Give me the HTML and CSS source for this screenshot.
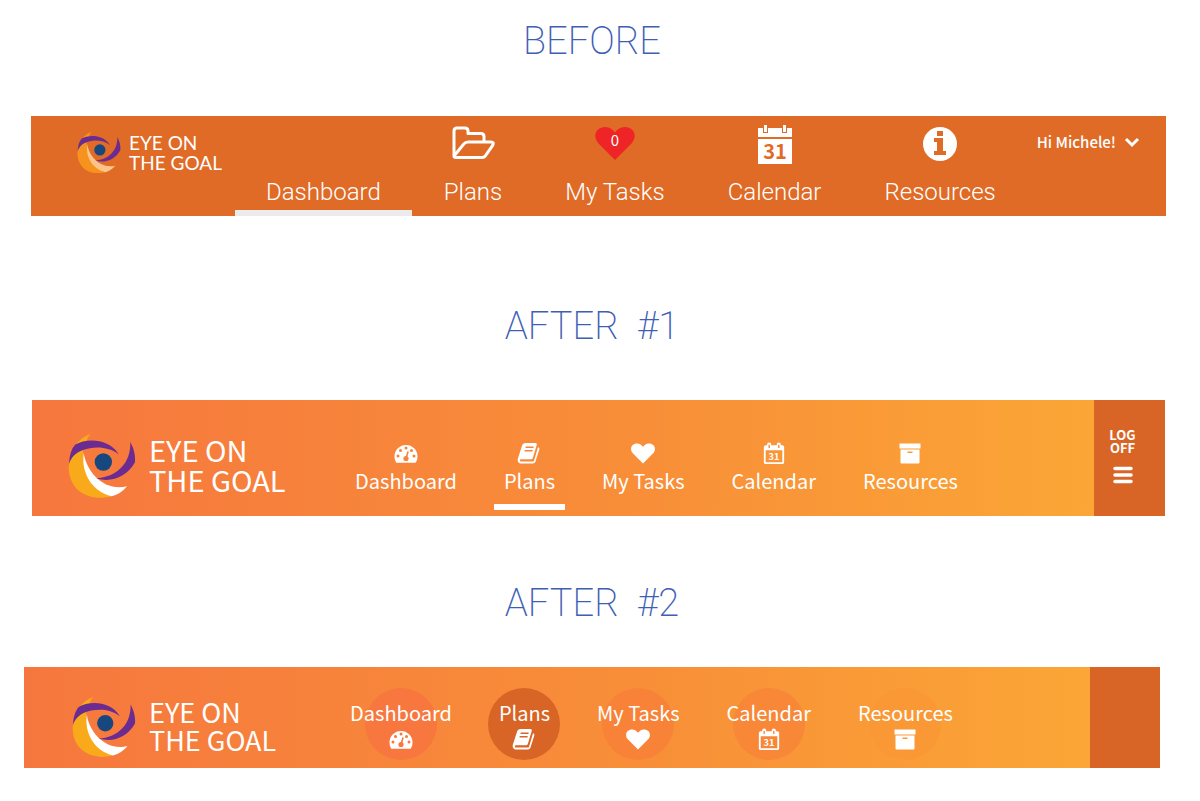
FILE: index.html
```html
<!DOCTYPE html>
<html lang="en">
<head>
<meta charset="utf-8">
<title>Eye on the Goal – navigation redesign</title>
<link rel="stylesheet" href="styles.css">
</head>
<body>
<svg class="sprite" aria-hidden="true">
  <symbol id="logo" viewBox="145 130 204 198">
    <path class="logo-gold" d="M212 133C192 140 176 154 165 170L148 222C144 246 152 278 172 298C200 326 244 329 276 320C226 302 191 254 190 181L200 156Q204 143 212 133Z"/>
    <path class="logo-light" d="M192 190C202 250 254 306 322 290Q304 313 276 320C214 305 184 246 192 190Z"/>
    <path class="logo-purple" d="M148 222C150 196 154 180 166 165C200 146 266 144 298 195C266 169 222 170 190 181C166 190 156 202 148 222Z"/>
    <path class="logo-purple" d="M332 157C341 174 348 194 346 218C322 262 274 280 230 266C290 262 334 222 332 157Z"/>
    <circle class="logo-pupil" cx="251" cy="217" r="26"/>
  </symbol>
  <symbol id="gauge" viewBox="0 0 24 24">
    <path fill="currentColor" d="M.5 15.500a11.500 11.500 0 0 1 23 0c0 2-.5 4-1.500 5.700q-.3.600-1.200.600H3.200q-.9 0-1.200-.6C1 19.500.5 17.500.5 15.500z"/>
    <g class="cut">
      <circle cx="4" cy="15" r="1.500"/><circle cx="6.500" cy="9.500" r="1.500"/><circle cx="12" cy="7" r="1.500"/><circle cx="17.500" cy="9.500" r="1.500"/><circle cx="20" cy="15" r="1.500"/>
      <circle cx="12" cy="17.500" r="2.600"/><path d="M13.300 10.300l1.500.4-2 7-1.600-.3z"/>
    </g>
  </symbol>
  <symbol id="book" viewBox="0 0 24 24">
    <path fill="currentColor" d="M8.500 2h9.800q2 0 1.500 1.800l-4 13.200q-.4 1.300-1.800 1.300H4.300q-1.800 0-1.400 1.400.2.900 1.600.900h11.200q1 0 1.400-1.200L21 6.200q1.900.4 1.300 2.300l-3.900 12.200q-.6 1.800-2.600 1.800H4.200q-2.800 0-3.500-2.800-.2-1.200.2-2.200L5.200 4.300Q6 2 8.500 2z"/>
    <path class="cut" d="M8.800 5.500h8l-.4 1.400h-8zM7.800 9h8l-.4 1.400h-8z"/>
  </symbol>
  <symbol id="heart" viewBox="0 0 24 24">
    <path fill="currentColor" d="M12 22.500L1.800 12.300C-2 7.500 1 2.500 6 2.500c3 0 4.700 1.800 6 3.300 1.300-1.500 3-3.300 6-3.300 5 0 8 5 4.200 9.800z"/>
  </symbol>
  <symbol id="calendar" viewBox="0 0 24 26">
    <path fill="currentColor" fill-rule="evenodd" d="M3 4.500h1.500V4q0-2.500 2.300-2.500T9 4v.5h6V4q0-2.500 2.200-2.500T19.500 4v.5H21q2 0 2 2V23q0 2-2 2H3q-2 0-2-2V6.500q0-2 2-2zM3 10v13h18V10z"/>
    <path class="cut" d="M6.100 4h1.400v3.500H6.100zM16.500 4h1.400v3.500h-1.400z"/>
    <text class="date-small" x="12" y="20.500">31</text>
  </symbol>
  <symbol id="box" viewBox="0 0 24 24">
    <path fill="currentColor" fill-rule="evenodd" d="M1.500 2.500h21v5h-21zM2.500 8.500h19v13q0 1-1 1h-17q-1 0-1-1zM9.500 10.500v1.500h5v-1.500z"/>
  </symbol>
</svg>

<main>
<section class="before">
  <h2 class="title">BEFORE</h2>
  <header class="bar bar-before">
    <a class="brand" href="#"><svg class="brand-mark"><use href="#logo"/></svg><span>EYE ON<br>THE GOAL</span></a>
    <nav class="nav">
      <a class="item active" href="#"><span>Dashboard</span></a>
      <a class="item" href="#">
        <svg class="icon" viewBox="0 0 44 40" fill="none" stroke="currentColor" stroke-width="3" stroke-linejoin="round"><path d="M3 31V6q0-3 3-3h8q3 0 3 3v2.500h13q3 0 3 3V17M3 31q0 1.500 2 1.500h26q2 0 3.500-1.800l7-10Q43.500 17 40 17H17q-2.500 0-4.200 2L3 31z"/></svg>
        <span>Plans</span></a>
      <a class="item" href="#">
        <svg class="icon" viewBox="0 0 44 40"><path fill="#ef2427" d="M22 35L5 18C-1 10 4 2 12 2c5 0 8 3 10 5.500C24 5 27 2 32 2c8 0 13 8 7 16z"/><text class="count" x="22" y="20.500">0</text></svg>
        <span>My Tasks</span></a>
      <a class="item" href="#">
        <svg class="icon" viewBox="0 0 44 40"><path fill="currentColor" d="M5 3h5v5h5V3h14v5h5V3h5v9H5zM11 0h3v7h-3zM30 0h3v7h-3zM5 14h34v25H5z"/><text class="date-large" x="22" y="34">31</text></svg>
        <span>Calendar</span></a>
      <a class="item" href="#">
        <svg class="icon" viewBox="0 0 44 40"><circle cx="22" cy="19" r="17" fill="currentColor"/><path fill="#df6b27" d="M19 6h6v5h-6zM16 13h9v13h3v4H16v-4h3v-9h-3z"/></svg>
        <span>Resources</span></a>
    </nav>
    <button class="user" type="button">Hi Michele!<svg class="chevron" viewBox="0 0 16 12"><path d="M2 3l6 6 6-6" fill="none" stroke="currentColor" stroke-width="3"/></svg></button>
  </header>
</section>

<section class="after after-one">
  <h2 class="title">AFTER  #1</h2>
  <header class="bar">
    <a class="brand" href="#"><svg class="brand-mark"><use href="#logo"/></svg><span>EYE ON<br>THE GOAL</span></a>
    <nav class="nav">
      <a class="item" href="#"><svg class="icon"><use href="#gauge"/></svg><span>Dashboard</span></a>
      <a class="item active" href="#"><svg class="icon"><use href="#book"/></svg><span>Plans</span></a>
      <a class="item" href="#"><svg class="icon"><use href="#heart"/></svg><span>My Tasks</span></a>
      <a class="item" href="#"><svg class="icon"><use href="#calendar"/></svg><span>Calendar</span></a>
      <a class="item" href="#"><svg class="icon"><use href="#box"/></svg><span>Resources</span></a>
    </nav>
    <button class="side" type="button"><span>LOG<br>OFF</span><svg class="menu" viewBox="0 0 20 18"><path d="M2 2.500h16M2 9h16M2 15.500h16" stroke="currentColor" stroke-width="3.500" stroke-linecap="round"/></svg></button>
  </header>
</section>

<section class="after after-two">
  <h2 class="title">AFTER  #2</h2>
  <header class="bar">
    <a class="brand" href="#"><svg class="brand-mark"><use href="#logo"/></svg><span>EYE ON<br>THE GOAL</span></a>
    <nav class="nav">
      <a class="item tint-1" href="#"><span>Dashboard</span><svg class="icon"><use href="#gauge"/></svg></a>
      <a class="item active" href="#"><span>Plans</span><svg class="icon"><use href="#book"/></svg></a>
      <a class="item tint-2" href="#"><span>My Tasks</span><svg class="icon"><use href="#heart"/></svg></a>
      <a class="item tint-3" href="#"><span>Calendar</span><svg class="icon"><use href="#calendar"/></svg></a>
      <a class="item tint-4" href="#"><span>Resources</span><svg class="icon"><use href="#box"/></svg></a>
    </nav>
    <div class="side"></div>
  </header>
</section>
</main>
</body>
</html>
```
FILE: styles.css
```css
* { box-sizing: border-box; }
body { margin: 0; background: #fff; color: #fff; font-family: "Noto Sans CJK SC", "Noto Sans", sans-serif; }
a { color: inherit; text-decoration: none; }
button { border: 0; color: inherit; font: inherit; cursor: pointer; }
.sprite { display: none; }

.title {
  margin: 0;
  padding-right: 16px;
  color: #3f5fb5;
  font: 200 38px/48px Roboto, sans-serif;
  text-align: center;
  white-space: pre;
}
.bar { display: flex; align-items: stretch; }
.brand { display: flex; align-items: flex-start; flex: none; }
.brand-mark { flex: none; }
.nav { display: flex; flex: 1; }
.item { display: flex; flex-direction: column; align-items: center; position: relative; white-space: nowrap; }

.logo-gold { fill: var(--gold, #f9aa1b); }
.logo-light { fill: var(--light, #fff); }
.logo-purple { fill: #6b2b91; }
.logo-pupil { fill: #17477f; }

.before { padding-top: 17px; }
.bar-before { height: 100px; margin: 51px 34px 0 31px; background: #df6b27; font-family: Roboto, sans-serif; }
.bar-before .brand { --gold: #f5931e; --light: #fcc48a; width: 204px; padding: 15px 0 0 46px; gap: 8px; font: 400 19px/20px Lato, sans-serif; }
.bar-before .brand span { padding-top: 2px; }
.bar-before .brand-mark { width: 44px; height: 43px; }
.bar-before .nav { gap: 1px; }
.bar-before .item { justify-content: flex-end; padding: 0 31px 9px; font-size: 24px; font-weight: 300; line-height: 30px; }
.bar-before .icon { width: 44px; height: 40px; margin-bottom: 12px; }
.bar-before .active { border-bottom: 6px solid #ebebeb; padding-bottom: 3px; }
.count { fill: #fff; font: 400 15px "Noto Sans CJK SC", sans-serif; text-anchor: middle; }
.date-large { fill: #df6b27; font: 700 20px "Noto Sans CJK SC", sans-serif; text-anchor: middle; }
.user { display: flex; align-items: center; align-self: flex-start; gap: 8px; margin: 16px 26px 0 0; padding: 0; background: none; font: 500 15px/20px "Noto Sans CJK SC", sans-serif; white-space: nowrap; }
.chevron { width: 16px; height: 12px; }

.after .bar { background: linear-gradient(90deg, #f6773e, #f88f38 55%, #fba636 94%); }
.after .side { display: flex; flex: none; flex-direction: column; align-items: center; justify-content: center; gap: 12px; width: 71px; background: #d86526; }
.after .icon { width: 24px; height: 24px; }
.cut { fill: var(--cut, #f7843a); }
.date-small { fill: currentColor; font: 700 10px "Noto Sans CJK SC", sans-serif; text-anchor: middle; }

.after-one { padding-top: 86px; }
.after-one .bar { height: 116px; margin: 50px 35px 0 32px; }
.after-one .brand { width: 323px; padding: 33px 0 0 36px; gap: 13px; font-size: 29px; line-height: 30px; }
.after-one .brand span { padding-top: 1px; }
.after-one .brand-mark { width: 68px; height: 66px; }
.after-one .nav { gap: 47px; }
.after-one .item { padding-top: 41px; font-size: 20px; line-height: 28px; }
.after-one .icon { margin-bottom: 2px; }
.after-one .active::after { content: ""; position: absolute; right: -10px; bottom: 6px; left: -10px; height: 6px; background: #fff; }
.after-one .side { padding: 0 14px 4px 0; font-size: 13px; font-weight: 700; line-height: 13px; }
.menu { width: 20px; height: 18px; }

.after-two { padding-top: 63px; }
.after-two .bar { height: 101px; margin: 40px 40px 0 24px; }
.after-two .brand { width: 326px; padding: 29px 0 0 48px; gap: 13px; font-size: 27px; line-height: 28px; }
.after-two .brand span { padding-top: 2px; }
.after-two .brand-mark { width: 64px; height: 62px; }
.after-two .nav { gap: 47px; }
.after-two .side { width: 70px; }
.after-two .item { isolation: isolate; padding-top: 32px; font-size: 20px; line-height: 28px; }
.after-two .item::before { content: ""; position: absolute; z-index: -1; top: 21px; left: calc(50% - 36px); width: 72px; height: 72px; border-radius: 50%; background: var(--tint); }
.tint-1 { --tint: #f7773f; --cut: #f7773f; }
.tint-2 { --tint: #f88338; }
.tint-3 { --tint: #f88738; --cut: #f88738; }
.tint-4 { --tint: #fa9836; }
.after-two .active { --tint: #d86526; --cut: #d86526; }
```
